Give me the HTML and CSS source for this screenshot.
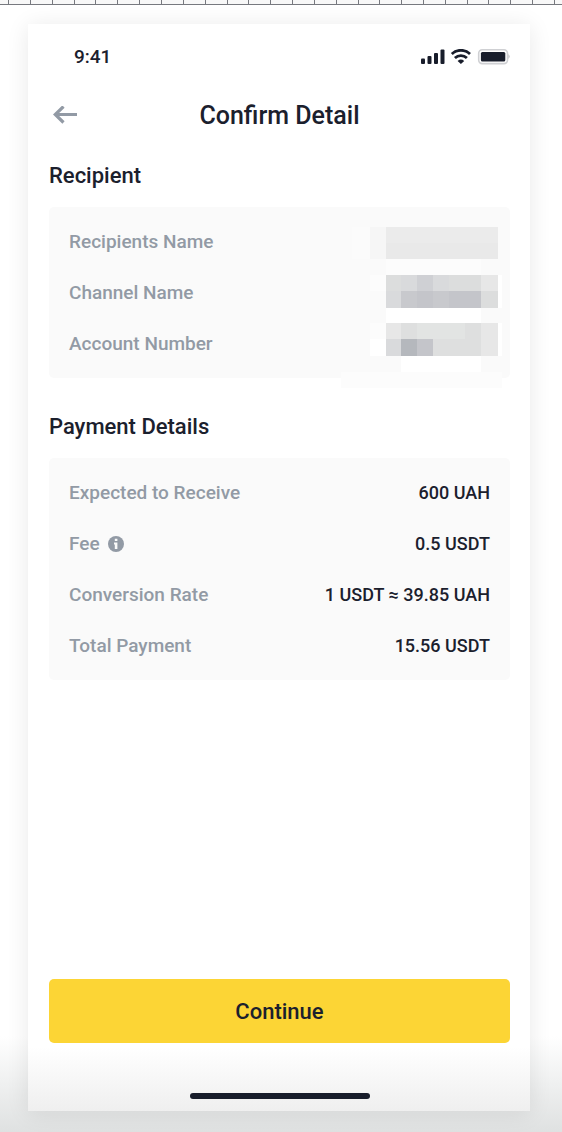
FILE: index.html
```html
<!DOCTYPE html>
<html lang="en">
<head>
<meta charset="utf-8">
<meta name="viewport" content="width=device-width, initial-scale=1">
<title>Confirm Detail</title>
<link rel="stylesheet" href="styles.css">
</head>
<body>
<div class="page">
  <svg class="ruler" viewBox="0 0 562 5" preserveAspectRatio="none" aria-hidden="true">
    <path d="M8.500 0v4M30.500 0v4M52.500 0v4M74.500 0v4M95.500 0v4M117.500 0v4M139.500 0v4M161.500 0v4M183.500 0v4M205.500 0v4M227.500 0v4M248.500 0v4M270.500 0v4M292.500 0v4M314.500 0v4M336.500 0v4M358.500 0v4M379.500 0v4M401.500 0v4M423.500 0v4M445.500 0v4M467.500 0v4M488.500 0v4M510.500 0v4M532.500 0v4M554.500 0v4M0 4.500h562"/>
  </svg>
  <main class="phone">
    <div class="status">
      <span class="clock">9:41</span>
      <svg class="indicators" viewBox="0 0 89 16" aria-hidden="true">
        <g fill="#181d2b">
          <rect x="0" y="9.500" width="4" height="5.500" rx="1"/>
          <rect x="6.500" y="7" width="4" height="8" rx="1"/>
          <rect x="13" y="4" width="4" height="11" rx="1"/>
          <rect x="19.500" y="0.500" width="4" height="14.500" rx="1"/>
          <path d="M36.600 11.900a5 5 0 0 1 6.600 0l-3.300 3.200z"/>
        </g>
        <g fill="none" stroke="#181d2b" stroke-width="2.800">
          <path d="M30.800 5a13 13 0 0 1 18.200 0M33.900 8.900a8.800 8.800 0 0 1 12 0"/>
        </g>
        <rect x="57.700" y="0.800" width="28.800" height="13.800" rx="3.500" fill="#fff" stroke="#cfd0d3" stroke-width="1.600"/>
        <rect x="59.900" y="2.900" width="24.400" height="9.600" rx="1.500" fill="#181d2b"/>
        <path d="M87.300 5q2.800 2.600 0 5z" fill="#c3c4c8"/>
      </svg>
    </div>
    <header class="topbar">
      <button class="back" type="button" aria-label="Back">
        <svg viewBox="0 0 24 18" aria-hidden="true"><path d="M24 8.500H2M10.500 0.500L2.200 8.500l8.300 8" fill="none" stroke="#929aa5" stroke-width="3.200"/></svg>
      </button>
      <h1 class="title">Confirm Detail</h1>
    </header>

    <section class="section">
      <h2 class="heading">Recipient</h2>
      <dl class="panel">
        <div class="row"><dt>Recipients Name</dt><dd></dd></div>
        <div class="row"><dt>Channel Name</dt><dd></dd></div>
        <div class="row"><dt>Account Number</dt><dd></dd></div>
        <svg class="mosaic" viewBox="0 0 161 162" shape-rendering="crispEdges" aria-hidden="true">
          <path fill="#fbfbfb" d="M11 1h18v32h-18z"/>
          <path fill="#f6f6f6" d="M29 1h16v32h-16z"/>
          <path fill="#ebebeb" d="M45 1h112v16h-112z"/>
          <path fill="#e9e9e9" d="M45 17h112v16h-112z"/>
          <path fill="#fcfcfc" d="M45 33h95v16h-95zM29 49h16v16h-16zM29 97h16v16h-16zM0 146h161v16h-161z"/>
          <path fill="#fff" d="M45 82h95v15h-95zM29 113h16v17h-16zM60 130h80v16h-80zM157 49h4v33h-4zM157 97h4v33h-4z"/>
          <path fill="#dcdddd" d="M45 49h15v16h-15zM108 49h32v16h-32zM140 65h17v17h-17z"/>
          <path fill="#d9dadc" d="M60 49h16v16h-16zM92 49h16v16h-16zM45 65h15v17h-15zM45 113h15v17h-15z"/>
          <path fill="#cfd0d4" d="M76 49h16v16h-16z"/>
          <path fill="#e7e7e7" d="M140 49h17v16h-17zM140 97h17v33h-17zM45 97h15v16h-15z"/>
          <path fill="#c8c9cd" d="M60 65h16v17h-16zM92 65h16v17h-16z"/>
          <path fill="#c4c5ca" d="M76 65h16v17h-16zM108 65h32v17h-32zM76 113h16v17h-16z"/>
          <path fill="#dedfdf" d="M60 97h16v16h-16zM124 97h16v16h-16zM92 113h48v17h-48z"/>
          <path fill="#e2e4e3" d="M76 97h48v16h-48z"/>
          <path fill="#b5b8bd" d="M60 113h16v17h-16z"/>
        </svg>
      </dl>
    </section>

    <section class="section">
      <h2 class="heading">Payment Details</h2>
      <dl class="panel">
        <div class="row"><dt>Expected to Receive</dt><dd>600 UAH</dd></div>
        <div class="row">
          <dt>Fee
            <svg class="info" viewBox="0 0 16 16" aria-hidden="true"><circle cx="8" cy="8" r="8" fill="#929aa5"/><path d="M6.800 2.800h2.600v2.200h-2.600zM6 6.500h3.400v6.500h-2.600v-4.500h-.8z" fill="#fafafa"/></svg>
          </dt>
          <dd>0.5 USDT</dd>
        </div>
        <div class="row"><dt>Conversion Rate</dt><dd>1 USDT ≈ 39.85 UAH</dd></div>
        <div class="row"><dt>Total Payment</dt><dd>15.56 USDT</dd></div>
      </dl>
    </section>

    <footer class="footer">
      <button class="continue" type="button">Continue</button>
      <div class="home"></div>
    </footer>
  </main>
</div>
</body>
</html>
```
FILE: styles.css
```css
* {
  box-sizing: border-box;
}

body {
  margin: 0;
  color: #1b202d;
  font-family: Roboto, "Liberation Sans", sans-serif;
}

.page {
  display: flex;
  flex-direction: column;
  min-height: 100vh;
  background: linear-gradient(to top, #dfe1e1, #fff 96px);
}

.ruler {
  display: block;
  width: 100%;
  height: 5px;
  fill: none;
  stroke: #77797f;
  background: #f8f8f8;
}

.phone {
  display: flex;
  flex: 1;
  flex-direction: column;
  margin: 19px 32px 21px 28px;
  padding: 0 20px 12px 21px;
  background: linear-gradient(to top, #efefef, #fff 64px);
  box-shadow: 0 2px 22px rgba(0, 0, 0, 0.09);
}

.status {
  display: flex;
  align-items: center;
  justify-content: space-between;
  height: 65px;
  padding-left: 25px;
}

.clock {
  font-size: 19px;
  font-weight: 500;
}

.indicators {
  width: 89px;
  height: 16px;
}

.topbar {
  display: grid;
  grid-template-columns: 32px 1fr 32px;
  align-items: center;
  height: 52px;
}

.back {
  display: flex;
  padding: 4px;
  border: 0;
  background: none;
}

.back svg {
  width: 24px;
  height: 18px;
}

.title {
  margin: 0;
  font-size: 25px;
  font-weight: 500;
  text-align: center;
}

.heading {
  margin: 0;
  padding: 20px 0 16px;
  font-size: 22px;
  font-weight: 500;
  line-height: 30px;
}

.section + .section {
  padding-top: 14px;
}

.panel {
  position: relative;
  margin: 0;
  padding: 9px 20px;
  border-radius: 5px;
  background: #fafafa;
}

.row {
  display: flex;
  align-items: center;
  justify-content: space-between;
  height: 51px;
  font-size: 19px;
  font-weight: 500;
}

.row dt {
  display: flex;
  align-items: center;
  gap: 8px;
  color: #929aa5;
}

.row dd {
  margin: 0;
  font-size: 18px;
}

.info {
  width: 16px;
  height: 16px;
}

.mosaic {
  position: absolute;
  top: 19px;
  right: 8px;
  width: 161px;
  height: 162px;
}

.footer {
  display: flex;
  flex-direction: column;
  align-items: center;
  gap: 50px;
  margin-top: auto;
}

.continue {
  width: 100%;
  height: 64px;
  border: 0;
  border-radius: 5px;
  background: #fcd535;
  color: #1b202d;
  font: 500 22px Roboto, "Liberation Sans", sans-serif;
}

.home {
  width: 180px;
  height: 6px;
  border-radius: 3px;
  background: #181d2b;
}
```
